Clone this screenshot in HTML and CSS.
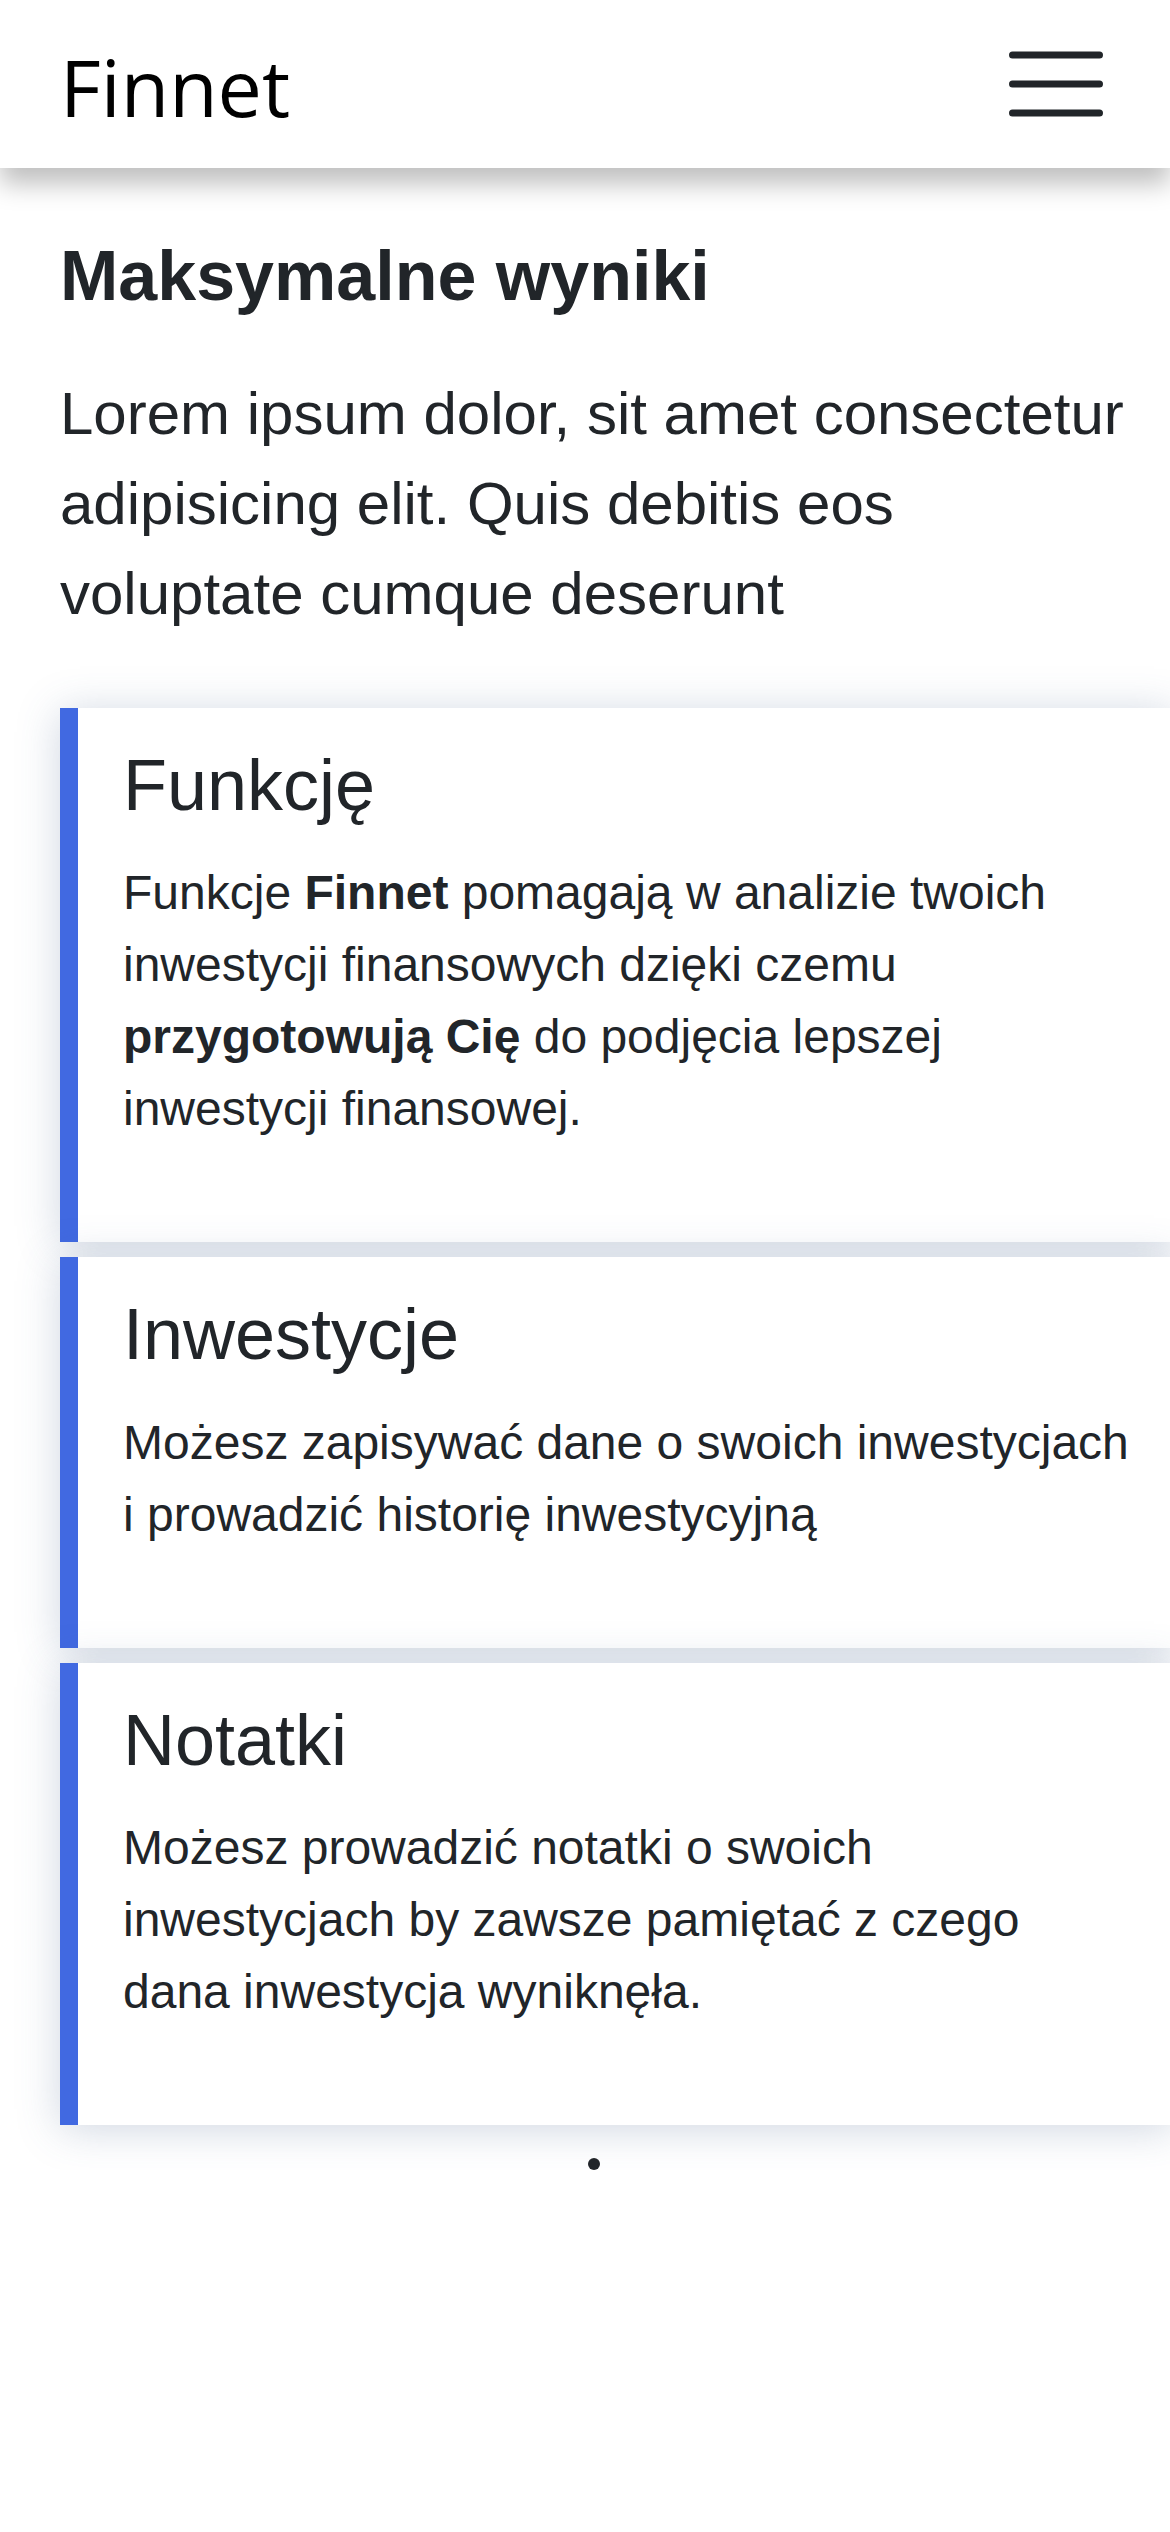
FILE: index.html
```html
<!DOCTYPE html>
<html lang="pl">
<head>
    <meta charset="UTF-8">
    <meta name="viewport" content="width=device-width, initial-scale=1.0">
    <title>Finnet</title>
    <link rel="stylesheet" href="styles.css">
</head>
<body>
    <nav class="navbar">
        <a class="brand" href="#">Finnet</a>
        <button class="toggler" aria-label="Menu">
            <svg width="94" height="66" viewBox="0 0 94 66">
                <path d="M3.5 4h87M3.5 33h87M3.5 62h87" stroke="#212529" stroke-width="7" stroke-linecap="round" fill="none"/>
            </svg>
        </button>
    </nav>

    <main class="content">
        <h2 class="section-title">Maksymalne wyniki</h2>
        <p class="lead">Lorem ipsum dolor, sit amet consectetur adipisicing elit. Quis debitis eos voluptate cumque deserunt</p>

        <div class="features">
            <div class="feature-card">
                <h3>Funkcję</h3>
                <p>Funkcje <strong>Finnet</strong> pomagają w analizie twoich inwestycji finansowych dzięki czemu <strong>przygotowują Cię</strong> do podjęcia lepszej inwestycji finansowej.</p>
            </div>
            <div class="feature-card">
                <h3>Inwestycje</h3>
                <p>Możesz zapisywać dane o swoich inwestycjach i prowadzić historię inwestycyjną</p>
            </div>
            <div class="feature-card">
                <h3>Notatki</h3>
                <p>Możesz prowadzić notatki o swoich inwestycjach by zawsze pamiętać z czego dana inwestycja wyniknęła.</p>
            </div>
        </div>

        <div class="dots">
            <span class="dot"></span>
        </div>
    </main>
</body>
</html>
```

FILE: styles.css
```css
body {
    margin: 0;
    background-color: #fff;
    color: #212529;
    font-family: 'Liberation Sans', Arial, sans-serif;
    overflow-x: hidden;
}

.navbar {
    height: 168px;
    display: flex;
    align-items: center;
    justify-content: space-between;
    padding: 0 67px 0 60px;
    background-color: #fff;
    box-shadow: 0 16px 24px rgba(0, 0, 0, 0.25);
    position: relative;
    z-index: 2;
}

.brand {
    font-family: 'Open Sans', sans-serif;
    font-size: 79px;
    line-height: 1;
    color: #000;
    text-decoration: none;
    margin-top: 4px;
}

.toggler {
    background: none;
    border: none;
    padding: 0;
    display: flex;
}

.content {
    width: 1068px;
    padding: 0 0 0 60px;
}

.section-title {
    font-size: 70px;
    font-weight: 700;
    line-height: 1.2;
    margin: 66px 0 0;
}

.lead {
    font-size: 60px;
    line-height: 90px;
    margin: 51px 0 0;
}

.features {
    display: flex;
    flex-direction: column;
    gap: 15px;
    margin-top: 69px;
}

.feature-card {
    width: 1006px;
    flex-shrink: 0;
    background-color: #fff;
    border-left: 18px solid #4169e1;
    padding: 34px 45px 97px;
    box-shadow: 0 4px 40px rgba(71, 96, 140, 0.26);
}

.feature-card h3 {
    font-size: 72px;
    font-weight: 400;
    line-height: 1.2;
    margin: 0 0 29px;
}

.feature-card p {
    font-size: 48px;
    line-height: 72px;
    margin: 0;
}

.dots {
    display: flex;
    justify-content: center;
    margin-top: 33px;
}

.dot {
    width: 12px;
    height: 12px;
    border-radius: 50%;
    background-color: #212529;
}
```
